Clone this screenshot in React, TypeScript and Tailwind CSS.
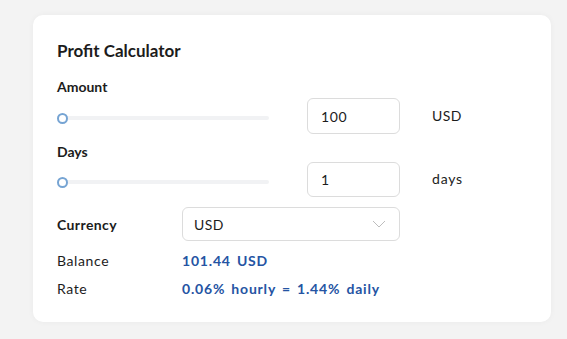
import React from "react";

function Slider() {
  return (
    <div className="relative w-[212px] h-[12px] flex items-center">
      <div className="w-full h-[4px] rounded-full bg-[#f1f2f4]" />
      <div className="absolute left-0 top-[1px] w-[11px] h-[11px] rounded-full border-2 border-[#76a4d3] bg-white" />
    </div>
  );
}

export default function App() {
  return (
    <div
      className="w-[567px] h-[339px] bg-[#f3f3f3] pt-[15px] pl-[33px]"
      style={{ fontFamily: "Lato, 'Open Sans', sans-serif" }}
    >
      <div className="w-[518px] h-[307px] bg-white rounded-[10px] shadow-[0_0_6px_rgba(0,0,0,0.04)] pl-6 pt-[26px] text-[#1c1c1c]">
        <div className="text-[17px] leading-[20px] font-bold">Profit Calculator</div>
        <div className="mt-4 text-[14px] leading-[20px] font-bold">Amount</div>
        <div className="mt-px flex items-center h-[36px]">
          <div className="w-[250px] pt-[4px]">
            <Slider />
          </div>
          <div className="w-[93px] h-[36px] border border-[#dcdcdc] rounded-[6px] flex items-center pl-[13px] text-[14px] tracking-[0.6px]">
            100
          </div>
          <div className="ml-[32px] text-[14px] pb-[2px] tracking-[0.4px]">USD</div>
        </div>
        <div className="mt-2 text-[14px] leading-[20px] font-bold">Days</div>
        <div className="flex items-center h-[35px]">
          <div className="w-[250px] pt-[4px]">
            <Slider />
          </div>
          <div className="w-[93px] h-[35px] border border-[#dcdcdc] rounded-[6px] flex items-center pl-[13px] text-[14px]">
            1
          </div>
          <div className="ml-[32px] text-[14px] pb-[2px] tracking-[0.8px]">days</div>
        </div>
        <div className="mt-[10px] flex items-center h-[34px]">
          <div className="w-[125px] text-[14px] font-bold tracking-[0.4px]">Currency</div>
          <div className="w-[218px] h-[34px] border border-[#dcdcdc] rounded-[6px] flex items-center justify-between pl-[11px] pr-[13px] text-[14px]">
            <span className="tracking-[0.4px]">USD</span>
            <svg width="14" height="8" viewBox="0 0 14 8" fill="none">
              <polyline points="1,1 7,7 13,1" stroke="#bdbdbd" strokeWidth="1" />
            </svg>
          </div>
        </div>
        <div className="mt-[9px] flex items-center h-[20px] text-[14px]">
          <div className="w-[125px] tracking-[0.6px]">Balance</div>
          <div className="font-bold text-[#2554a3] tracking-[0.8px] [word-spacing:2px]">101.44 USD</div>
        </div>
        <div className="mt-2 flex items-center h-[20px] text-[14px]">
          <div className="w-[125px] tracking-[0.6px]">Rate</div>
          <div className="font-bold text-[#2554a3] tracking-[0.8px] [word-spacing:2px]">0.06% hourly = 1.44% daily</div>
        </div>
      </div>
    </div>
  );
}
